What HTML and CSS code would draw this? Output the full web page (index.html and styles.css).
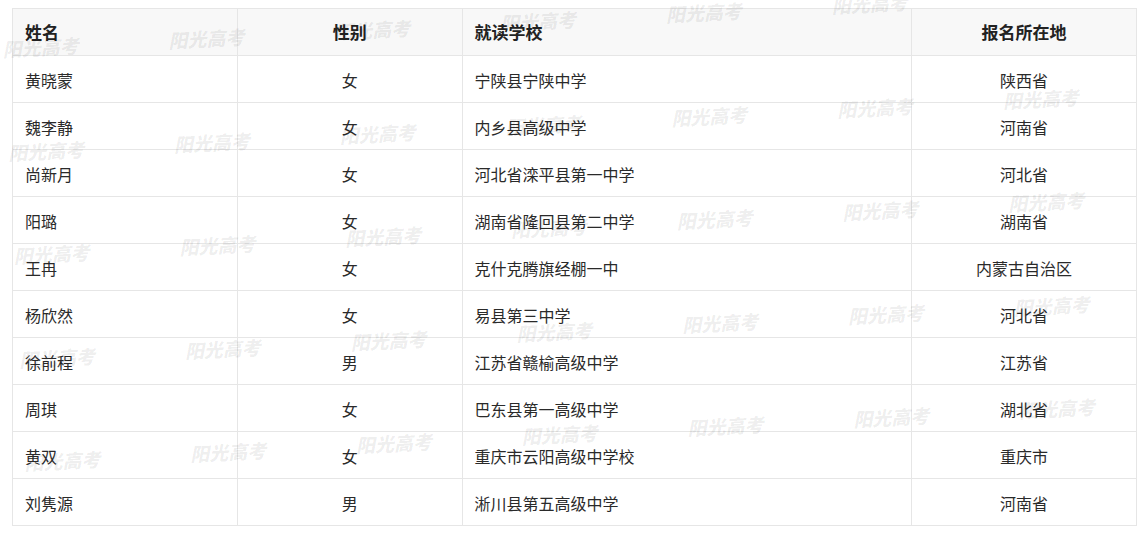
FILE: index.html
```html
<!DOCTYPE html>
<html lang="zh-CN">
<head>
<meta charset="utf-8">
<title>名单</title>
<link rel="stylesheet" href="styles.css">
</head>
<body>
<div class="page">
  <table class="list">
    <colgroup>
      <col class="c-name"><col class="c-sex"><col class="c-school"><col class="c-loc">
    </colgroup>
    <thead>
      <tr><th class="left">姓名</th><th class="center">性别</th><th class="left">就读学校</th><th class="center">报名所在地</th></tr>
    </thead>
    <tbody>
      <tr><td class="left">黄晓蒙</td><td class="center">女</td><td class="left">宁陕县宁陕中学</td><td class="center">陕西省</td></tr>
      <tr><td class="left">魏李静</td><td class="center">女</td><td class="left">内乡县高级中学</td><td class="center">河南省</td></tr>
      <tr><td class="left">尚新月</td><td class="center">女</td><td class="left">河北省滦平县第一中学</td><td class="center">河北省</td></tr>
      <tr><td class="left">阳璐</td><td class="center">女</td><td class="left">湖南省隆回县第二中学</td><td class="center">湖南省</td></tr>
      <tr><td class="left">王冉</td><td class="center">女</td><td class="left">克什克腾旗经棚一中</td><td class="center">内蒙古自治区</td></tr>
      <tr><td class="left">杨欣然</td><td class="center">女</td><td class="left">易县第三中学</td><td class="center">河北省</td></tr>
      <tr><td class="left">徐前程</td><td class="center">男</td><td class="left">江苏省赣榆高级中学</td><td class="center">江苏省</td></tr>
      <tr><td class="left">周琪</td><td class="center">女</td><td class="left">巴东县第一高级中学</td><td class="center">湖北省</td></tr>
      <tr><td class="left">黄双</td><td class="center">女</td><td class="left">重庆市云阳高级中学校</td><td class="center">重庆市</td></tr>
      <tr><td class="left">刘隽源</td><td class="center">男</td><td class="left">淅川县第五高级中学</td><td class="center">河南省</td></tr>
    </tbody>
  </table>
</div>
<div class="watermarks" aria-hidden="true">
  <span>阳光高考</span><span>阳光高考</span><span>阳光高考</span><span>阳光高考</span><span>阳光高考</span><span>阳光高考</span><span class="gap"></span>
  <span>阳光高考</span><span>阳光高考</span><span>阳光高考</span><span>阳光高考</span><span>阳光高考</span><span>阳光高考</span><span>阳光高考</span>
  <span>阳光高考</span><span>阳光高考</span><span>阳光高考</span><span>阳光高考</span><span>阳光高考</span><span>阳光高考</span><span>阳光高考</span>
  <span>阳光高考</span><span>阳光高考</span><span>阳光高考</span><span>阳光高考</span><span>阳光高考</span><span>阳光高考</span><span>阳光高考</span>
  <span>阳光高考</span><span>阳光高考</span><span>阳光高考</span><span>阳光高考</span><span>阳光高考</span><span>阳光高考</span><span>阳光高考</span>
</div>
</body>
</html>
```

FILE: styles.css
```css
html, body {
  margin: 0;
  padding: 0;
  background: #fff;
}

body {
  font-family: "Noto Sans CJK SC", "Liberation Sans", sans-serif;
  color: #333;
  position: relative;
  overflow: hidden;
}

.page {
  padding: 8px 8px 0 12px;
}

.list {
  width: 1125px;
  border-collapse: collapse;
  table-layout: fixed;
}

.c-name, .c-sex, .c-loc { width: 20%; }
.c-school { width: 40%; }

.list th,
.list td {
  border: 1px solid #e6e6e6;
  height: 47px;
  padding: 0 12px;
  box-sizing: border-box;
  font-size: 16px;
  line-height: 20px;
  white-space: nowrap;
}

.list td {
  padding-top: 2px;
  font-weight: 400;
  color: #2a2a2a;
}

.list th {
  background: #f8f8f8;
  font-weight: 700;
  color: #222;
  font-size: 17px;
  padding-top: 0;
}

.left { text-align: left; }
.center { text-align: center; }

.watermarks {
  position: absolute;
  left: 2px;
  top: 36px;
  transform: rotate(-3deg);
  transform-origin: 0 0;
  display: grid;
  grid-template-columns: repeat(7, 166px);
  grid-auto-rows: 103.5px;
  pointer-events: none;
}

.watermarks span {
  display: block;
  height: 26px;
  line-height: 26px;
  font-family: "Noto Sans CJK SC", sans-serif;
  font-size: 19px;
  font-weight: 900;
  font-style: italic;
  color: rgba(0, 0, 0, 0.07);
  white-space: nowrap;
}
```
